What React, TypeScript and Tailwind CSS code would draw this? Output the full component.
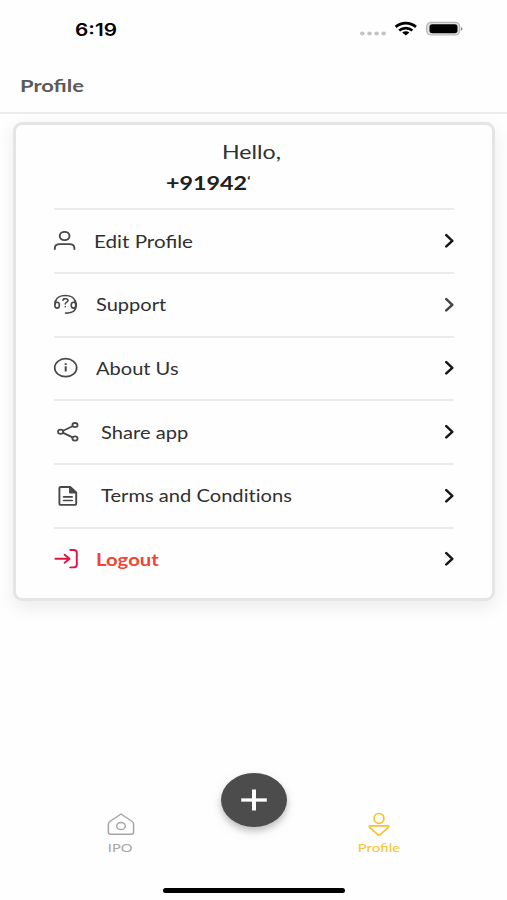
import type { ReactNode } from "react";

type MenuItem = {
  label: string;
  icon: ReactNode;
  labelClass: string;
  chevronClass?: string;
};

const menuItems: MenuItem[] = [
  {
    label: "Edit Profile",
    labelClass: "ml-[12px] scale-x-[1.25] text-[#303030]",
    icon: (
      <>
        <ellipse cx="12.6" cy="10" rx="4.9" ry="4.1" />
        <path d="M2.8 23v-.8c0-2.6 2-4.1 5-4.1h9.600c3 0 5 1.500 5 4.100v.8" />
      </>
    )
  },
  {
    label: "Support",
    labelClass: "ml-[14px] scale-x-[1.215] text-[#303030]",
    chevronClass: "text-[#444]",
    icon: (
      <g strokeWidth="1.6">
        <path d="M3.300 11.500C4.500 7.600 8.500 5.500 13.300 5.500s9 2.300 10.200 6" />
        <ellipse cx="5.100" cy="15.200" rx="2.300" ry="2.900" />
        <path d="M3 14.200c-.3-1.200 0-2.500.9-3.700" />
        <ellipse cx="21.500" cy="15.200" rx="2.300" ry="2.900" />
        <path d="M22.600 10.200c2.500 3.400 2.200 8-.6 10.700-1.900 1.500-4.500 2.200-8.400 2.200" />
        <path d="M10.900 10.300c.3-2.300 5.100-2.100 5.100.2 0 1.700-2.700 1.600-2.700 3.500M13.300 16.600v.2" />
      </g>
    )
  },
  {
    label: "About Us",
    labelClass: "ml-[14px] scale-x-[1.215] text-[#303030]",
    icon: (
      <>
        <ellipse cx="13.700" cy="14.700" rx="11" ry="9" strokeWidth="1.700" />
        <path d="M13.700 13.200v5.200M13.700 10.200v1.700" strokeWidth="2" strokeLinecap="butt" />
      </>
    )
  },
  {
    label: "Share app",
    labelClass: "ml-[19px] scale-x-[1.220] text-[#303030]",
    icon: (
      <g strokeWidth="1.800">
        <ellipse cx="8.600" cy="14.800" rx="2.600" ry="2.100" />
        <ellipse cx="23" cy="8.100" rx="2.600" ry="2.100" />
        <ellipse cx="23" cy="21.500" rx="2.600" ry="2.100" />
        <path d="M11.200 13.700 20.500 9.300M11.200 15.900l9.300 4.500" />
      </g>
    )
  },
  {
    label: "Terms and Conditions",
    labelClass: "ml-[19px] scale-x-[1.220] text-[#303030] [font-variant-ligatures:none]",
    icon: (
      <>
        <path d="M9 6h9.200l6 5.500v10.900c0 .9-.7 1.500-1.600 1.500H9c-.9 0-1.600-.6-1.600-1.500V7.500C7.400 6.600 8.100 6 9 6Z" />
        <path d="M17.600 6v6h6.600Z" fill="currentColor" strokeWidth="1" />
        <path d="M11.600 15.900h8.600M11.600 19.500h8.600" strokeWidth="1.600" />
      </>
    )
  },
  {
    label: "Logout",
    labelClass: "ml-[14px] scale-x-[1.230] font-bold text-[#f04438]",
    icon: (
      <g className="text-[#dc1748]" stroke="currentColor">
        <path d="M3.400 14.700h14.200M12.600 10.700l5 4-5 4" />
        <path d="M18.300 6h3.200c2 0 3.300 1 3.300 2.700v12c0 1.700-1.300 2.700-3.300 2.700h-3.200" />
      </g>
    )
  }
];

function StatusBar() {
  return (
    <div className="flex h-[60px] items-center justify-between pr-[44px] pl-[75px]">
      <span className="origin-left scale-x-[1.22] pt-[1px] font-[Inter,sans-serif] text-[17px] font-semibold text-black">6:19</span>
      <svg width="104" height="20" viewBox="0 0 104 20" fill="none">
        <g fill="#c4c4c4">
          <ellipse cx="3.300" cy="13.500" rx="2.300" ry="1.900" />
          <ellipse cx="10.500" cy="13.500" rx="2.300" ry="1.900" />
          <ellipse cx="17.600" cy="13.500" rx="2.300" ry="1.900" />
          <ellipse cx="24.700" cy="13.500" rx="2.300" ry="1.900" />
        </g>
        <g stroke="#000" strokeWidth="2.700">
          <path d="M36.600 6.900c6-5.100 14.400-5.100 20.400 0" />
          <path d="M40.200 10.500c3.900-3.300 9.300-3.300 13.200 0" />
        </g>
        <path d="M43.200 12.400c2-1.700 5.200-1.700 7.200 0l-3.600 3.100Z" fill="#000" />
        <rect x="67.700" y="2.400" width="33" height="12.600" rx="4.200" fill="#e0e0e0" stroke="#b4b4b4" strokeWidth="1.200" />
        <rect x="70.500" y="4.200" width="28" height="9" rx="2.700" fill="#000" />
        <path d="M102 6.900c2 .6 2 3 0 3.700Z" fill="#888" />
      </svg>
    </div>
  );
}

function MenuRow({ item }: { item: MenuItem }) {
  return (
    <div className="flex h-[63.700px] items-center border-t-2 border-[#ebebeb]">
      <svg
        width="30"
        height="30"
        viewBox="0 0 30 30"
        fill="none"
        stroke="currentColor"
        strokeWidth="1.900"
        strokeLinecap="round"
        strokeLinejoin="round"
        className="-ml-[2px] shrink-0 text-[#484848]"
      >
        {item.icon}
      </svg>
      <span className={`origin-left pt-[2px] text-[16.500px] whitespace-nowrap ${item.labelClass}`}>{item.label}</span>
      <svg
        width="10"
        height="16"
        viewBox="0 0 10 16"
        fill="none"
        stroke="currentColor"
        strokeWidth="2.500"
        strokeLinecap="round"
        strokeLinejoin="round"
        className={`ml-auto shrink-0 ${item.chevronClass ?? "text-[#171717]"}`}
      >
        <path d="m2.300 2.200 6 5.600-6 5.600" />
      </svg>
    </div>
  );
}

function BottomNav() {
  return (
    <nav className="mt-[171.500px] grid grid-cols-[241px_25px_225px]">
      <div className="flex flex-col items-center pt-[39px] text-[#a6a6a6]">
        <svg width="30" height="25" viewBox="0 0 30 25" fill="none" stroke="currentColor" strokeWidth="1.500" strokeLinejoin="round">
          <path d="M15 2 3.900 9.500q-1.500 1-1.500 2.500v8.300q0 2 2.300 2h20.600q2.300 0 2.300-2V12q0-1.500-1.500-2.500Z" />
          <ellipse cx="15" cy="14" rx="4.300" ry="3.600" />
        </svg>
        <span className="mt-[3px] scale-x-[1.220] text-[12px] leading-4">IPO</span>
      </div>
      <div className="flex justify-center">
        <button
          type="button"
          className="flex h-[54px] w-[66px] shrink-0 items-center justify-center rounded-[50%] bg-[#4c4c4c] shadow-[0_4px_6px_rgba(0,0,0,0.2),0_4px_14px_rgba(0,0,0,0.08)]"
        >
          <svg width="28" height="24" viewBox="0 0 28 24" fill="none" stroke="#fff" strokeWidth="3.300">
            <path d="M1.200 12h25.600" />
            <path d="M14 1.500v21" strokeWidth="4" />
          </svg>
        </button>
      </div>
      <div className="flex flex-col items-center pt-[39px] text-[#f5c234]">
        <svg width="30" height="25" viewBox="0 0 30 25" fill="none" stroke="currentColor" strokeWidth="1.700" strokeLinejoin="round">
          <ellipse cx="15" cy="6.400" rx="4.900" ry="4.900" />
          <path d="M6.400 13.800h17.200q2.100 0 .7 1.500l-7.600 6.900q-1.700 1.300-3.400 0l-7.600-6.900q-1.300-1.500.7-1.500Z" />
        </svg>
        <span className="mt-[3px] scale-x-[1.250] text-[12px] leading-4">Profile</span>
      </div>
    </nav>
  );
}

export default function App() {
  return (
    <div className="flex h-[900px] w-[507px] flex-col overflow-hidden bg-[#fefefe] font-[Lato,sans-serif]">
      <StatusBar />
      <header className="flex h-[53.500px] items-center border-b-2 border-[#ececec] pb-[1px] pl-[20px]">
        <h1 className="origin-left scale-x-[1.290] text-[17px] font-bold text-[#5a5a5a]">Profile</h1>
      </header>

      <main className="mt-[8.500px] ml-[13px] h-[479px] w-[482px] rounded-[9px] border-[3px] border-[#e5e5e5] bg-[#fefefe] px-[38px] shadow-[0_6px_18px_rgba(0,0,0,0.08)]">
        <div className="flex h-[83.200px] flex-col pt-[14px]">
          <p className="origin-left translate-x-[168px] scale-x-[1.220] text-[19px] leading-[26px] text-[#303030]">Hello,</p>
          <p className="ml-[112px] flex origin-left scale-x-[1.260] pt-[5px] text-[18.500px] leading-[26px] font-bold whitespace-nowrap text-[#202020]">
            +91942<span className="text-[12px] leading-[22px]">‘</span>
          </p>
        </div>
        {menuItems.map((item) => (
          <MenuRow key={item.label} item={item} />
        ))}
      </main>

      <BottomNav />
      <div className="mt-auto mb-[7.500px] h-[5px] w-[182px] self-center rounded-full bg-black" />
    </div>
  );
}
